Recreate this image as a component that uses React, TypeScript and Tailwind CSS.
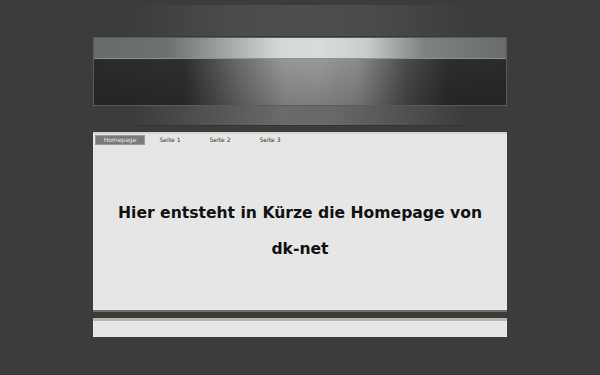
const tabs = ['Homepage', 'Seite 1', 'Seite 2', 'Seite 3'];

export default function App() {
  return (
    <div className="min-h-[375px] w-full bg-[#3c3c3c] font-['DejaVu_Sans',sans-serif]">
      <div className="mx-auto w-[414px]">
        {/* top glow */}
        <div className="h-[37px] pt-[5px]">
          <div className="mx-auto h-[31px] w-[340px] bg-[linear-gradient(90deg,rgba(70,70,70,0)_0%,#4b4b4b_30%,#4e4e4e_50%,#4b4b4b_70%,rgba(70,70,70,0)_100%)]" />
        </div>

        {/* header banner */}
        <div className="border border-[#5a5a5a]">
          <div className="h-[21px] border-b border-b-[#8c908e] bg-[linear-gradient(90deg,#676b69_0%,#6d716f_18%,#a9adab_34%,#d4d8d6_45%,#d8dcda_55%,#c9cdcb_66%,#7e8280_80%,#686c6a_100%)]" />
          <div className="h-[46px] bg-[linear-gradient(180deg,rgba(0,0,0,0)_0%,rgba(0,0,0,0.18)_100%),linear-gradient(90deg,#2b2b2b_0%,#2f2f2f_22%,#6e6e6e_36%,#969696_46%,#999_54%,#8a8a8a_64%,#4a4a4a_76%,#2d2d2d_86%,#2b2b2b_100%)]" />
        </div>

        {/* reflection */}
        <div className="h-[26px]">
          <div className="mx-auto h-[20px] w-[330px] border-b border-b-[#333] bg-[linear-gradient(90deg,rgba(60,60,60,0)_0%,#555_25%,#6a6a6a_45%,#686868_60%,#555_78%,rgba(60,60,60,0)_100%)]" />
        </div>

        {/* content panel */}
        <div className="border-t-2 border-b-2 border-t-[#d4d6c8] border-b-[#6f6f6f] bg-[#e6e6e6]">
          <nav className="flex pl-[2px] pt-[1px]">
            {tabs.map((t, i) => (
              <div
                key={t}
                className={
                  i === 0
                    ? 'flex h-[10px] w-[50px] items-center justify-center border border-[#999] bg-[#7a7a7a] text-[6px] leading-none text-[#e8e8e8]'
                    : 'flex h-[10px] w-[50px] items-center justify-center text-[6px] leading-none text-[#333]'
                }
              >
                {t}
              </div>
            ))}
          </nav>
          <div className="flex h-[165px] flex-col items-center pt-[58px] text-[15.6px] font-bold text-[#111]">
            <p className="leading-[20px]">Hier entsteht in Kürze die Homepage von</p>
            <p className="mt-[16px] leading-[20px]">dk-net</p>
          </div>
        </div>

        <div className="h-[6px]" />

        {/* second panel */}
        <div className="h-[19px] border-t-[3px] border-t-[#b4b8a4] bg-[#e6e6e6]" />
      </div>
    </div>
  );
}
